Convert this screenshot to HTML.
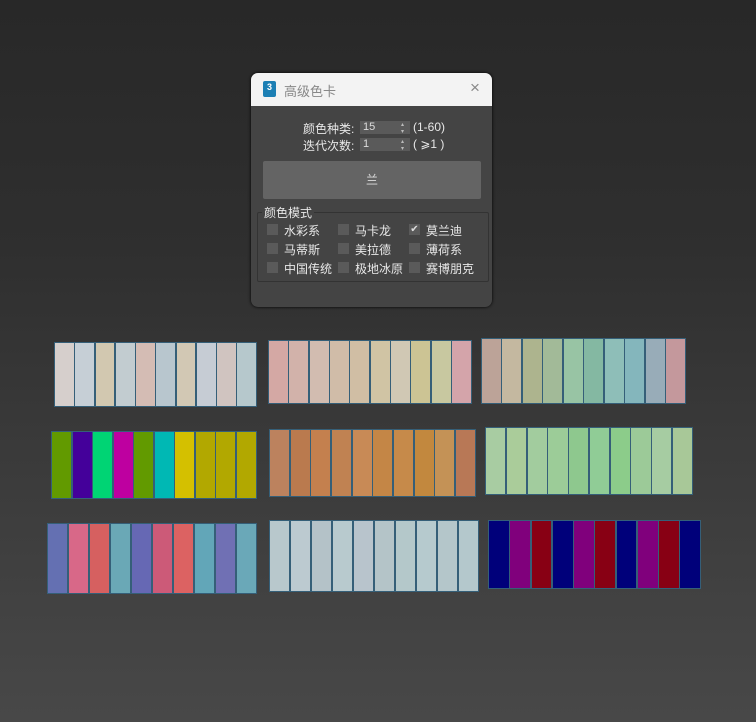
<!DOCTYPE html>
<html><head><meta charset="utf-8"><style>
body{margin:0;width:756px;height:722px;overflow:hidden;background:linear-gradient(#282828 0px,#2f2f2f 250px,#3a3a3a 450px,#484848 722px);font-family:"Liberation Sans","Noto Sans CJK SC",sans-serif;position:relative}
.card{position:absolute;display:flex;border:1.5px solid #355f78;box-sizing:border-box;background:#355f78;gap:1.5px}
.card div{flex:1}
#dlg{position:absolute;left:251px;top:73px;width:241px;height:234px;background:#444;border-radius:7px;overflow:hidden;box-shadow:0 0 3px #000}
#tb{height:33px;background:#f3f3f3;position:relative;color:#888;font-size:13px}
.t{position:absolute;color:#e8e8e8;font-size:12px;white-space:nowrap}
.sp{position:absolute;width:50px;height:13px;background:#5a5a5a;color:#ddd;font-size:11px;line-height:13px;padding-left:3px;box-sizing:border-box}
.sp:after{content:"▴▾";position:absolute;right:2px;top:0;font-size:6px;writing-mode:vertical-lr;color:#bbb}
.cb{position:absolute;width:11px;height:11px;background:#5a5a5a}
</style></head><body>
<div id="dlg">
 <div id="tb">
  <div style="position:absolute;left:12px;top:8px;width:13px;height:16px;background:#1c7fb4;border-radius:2px;color:#fff;font-size:9px;font-weight:bold;text-align:center;line-height:12px">3</div>
  <div style="position:absolute;left:33px;top:8px">高级色卡</div>
  <div style="position:absolute;left:219px;top:5px;font-size:17px;color:#888">×</div>
 </div>
 <div class="t" style="left:52px;top:47px">颜色种类:</div>
 <div class="sp" style="left:109px;top:48px">15</div>
 <div class="t" style="left:162px;top:47px">(1-60)</div>
 <div class="t" style="left:52px;top:64px">迭代次数:</div>
 <div class="sp" style="left:109px;top:65px">1</div>
 <div class="t" style="left:162px;top:64px">( ⩾1 )</div>
 <div style="position:absolute;left:12px;top:88px;width:218px;height:38px;background:#646464;border-radius:2px;color:#ddd;text-align:center;line-height:38px;font-size:12px">兰</div>
 <div style="position:absolute;left:6px;top:139px;width:230px;height:68px;border:1px solid #333;border-radius:2px"></div>
 <div class="t" style="left:11px;top:131px;background:#444;padding:0 2px">颜色模式</div>
 <div class="cb" style="left:16px;top:151px"></div><div class="t" style="left:33px;top:149px">水彩系</div>
 <div class="cb" style="left:87px;top:151px"></div><div class="t" style="left:104px;top:149px">马卡龙</div>
 <div class="cb" style="left:158px;top:151px;color:#ddd;font-size:10px;line-height:11px;text-align:center">✔</div><div class="t" style="left:175px;top:149px">莫兰迪</div>
 <div class="cb" style="left:16px;top:170px"></div><div class="t" style="left:33px;top:168px">马蒂斯</div>
 <div class="cb" style="left:87px;top:170px"></div><div class="t" style="left:104px;top:168px">美拉德</div>
 <div class="cb" style="left:158px;top:170px"></div><div class="t" style="left:175px;top:168px">薄荷系</div>
 <div class="cb" style="left:16px;top:189px"></div><div class="t" style="left:33px;top:187px">中国传统</div>
 <div class="cb" style="left:87px;top:189px"></div><div class="t" style="left:104px;top:187px">极地冰原</div>
 <div class="cb" style="left:158px;top:189px"></div><div class="t" style="left:175px;top:187px">赛博朋克</div>
</div>

<div class="card" style="left:54px;top:342px;width:203px;height:65px"><div style="background:#d6cfcc"></div><div style="background:#c6cfd6"></div><div style="background:#d2c8b0"></div><div style="background:#c2ccd0"></div><div style="background:#d4bcb4"></div><div style="background:#b8c6ce"></div><div style="background:#d2c8b4"></div><div style="background:#c6ccd4"></div><div style="background:#d0c4c0"></div><div style="background:#b6c8cc"></div></div>
<div class="card" style="left:268px;top:340px;width:204px;height:64px"><div style="background:#d4a8a4"></div><div style="background:#d2b2aa"></div><div style="background:#d2bcb0"></div><div style="background:#d0bca8"></div><div style="background:#d0bea4"></div><div style="background:#d0c4a4"></div><div style="background:#d0c8b4"></div><div style="background:#ccc494"></div><div style="background:#c8c8a0"></div><div style="background:#d4a4aa"></div></div>
<div class="card" style="left:481px;top:338px;width:205px;height:66px"><div style="background:#bca398"></div><div style="background:#c4b8a0"></div><div style="background:#adb48e"></div><div style="background:#a2ba98"></div><div style="background:#98c4a4"></div><div style="background:#84b8a2"></div><div style="background:#8ebeb8"></div><div style="background:#84b6bc"></div><div style="background:#98acb8"></div><div style="background:#c4989c"></div></div>
<div class="card" style="left:51px;top:431px;width:206px;height:68px"><div style="background:#629a00"></div><div style="background:#44009a"></div><div style="background:#00d474"></div><div style="background:#be00a0"></div><div style="background:#629a00"></div><div style="background:#00b8b4"></div><div style="background:#d4c000"></div><div style="background:#b2a800"></div><div style="background:#b2a800"></div><div style="background:#b2a800"></div></div>
<div class="card" style="left:269px;top:429px;width:207px;height:68px"><div style="background:#bc825e"></div><div style="background:#ba7a4e"></div><div style="background:#c4804e"></div><div style="background:#c08252"></div><div style="background:#c88a56"></div><div style="background:#c48646"></div><div style="background:#c68a4a"></div><div style="background:#c2883e"></div><div style="background:#c49256"></div><div style="background:#b87856"></div></div>
<div class="card" style="left:485px;top:427px;width:208px;height:68px"><div style="background:#a8cca2"></div><div style="background:#aacc9a"></div><div style="background:#a2cc9e"></div><div style="background:#9ccc98"></div><div style="background:#8ec88e"></div><div style="background:#90cc96"></div><div style="background:#8ccc8a"></div><div style="background:#9cca98"></div><div style="background:#a6cca2"></div><div style="background:#a8c898"></div></div>
<div class="card" style="left:47px;top:523px;width:210px;height:71px"><div style="background:#6470b2"></div><div style="background:#d86888"></div><div style="background:#d66060"></div><div style="background:#6aa8b6"></div><div style="background:#6668b4"></div><div style="background:#cc5a78"></div><div style="background:#dc6262"></div><div style="background:#62a6b8"></div><div style="background:#7070b4"></div><div style="background:#6aa8b8"></div></div>
<div class="card" style="left:269px;top:520px;width:210px;height:72px"><div style="background:#b8c8cc"></div><div style="background:#bccad0"></div><div style="background:#b4c2c8"></div><div style="background:#b8cace"></div><div style="background:#b8c4cc"></div><div style="background:#b4c4c8"></div><div style="background:#b4c8ca"></div><div style="background:#b6cace"></div><div style="background:#b4c6ca"></div><div style="background:#b4c8cc"></div></div>
<div class="card" style="left:488px;top:520px;width:213px;height:69px"><div style="background:#00007a"></div><div style="background:#80007c"></div><div style="background:#880014"></div><div style="background:#00007a"></div><div style="background:#80007c"></div><div style="background:#880014"></div><div style="background:#00007a"></div><div style="background:#80007c"></div><div style="background:#880014"></div><div style="background:#00007a"></div></div>
</body></html>
